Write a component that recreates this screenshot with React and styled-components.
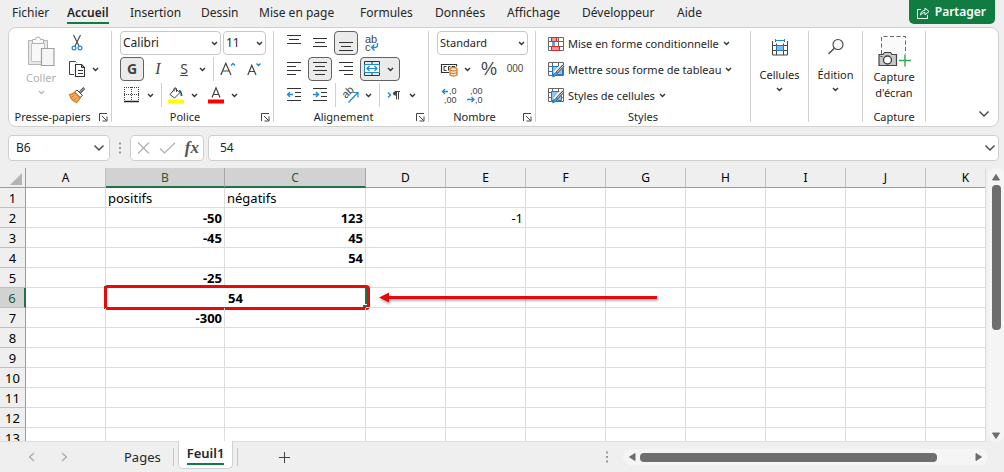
import React from "react";
import styled, { createGlobalStyle, css } from "styled-components";

const Global = createGlobalStyle`
  *, *::before, *::after { box-sizing: border-box; }
  body { margin: 0; background: #efefef; overflow: hidden; }
  button, input, select { font: inherit; color: inherit; }
  svg { overflow: visible; flex: none; }
`;

const Page = styled.div`
  display: flex;
  flex-direction: column;
  height: 100vh;
  background: #efefef;
  color: #262626;
  font: 12px/16px "Noto Sans", "Open Sans", sans-serif;
`;

/* ---------- Menu tabs ---------- */
const MenuBar = styled.header`
  display: flex;
  justify-content: space-between;
  height: 27px;
  padding: 0 9px 0 12px;
`;
const Tabs = styled.nav`
  display: flex;
  align-items: flex-start;
`;
const Tab = styled.a`
  flex: 0 0 ${(p) => p.$w}px;
  padding-top: 5px;
  color: inherit;
  text-decoration: none;
  white-space: nowrap;
  font-weight: ${(p) => (p.$active ? 600 : 400)};
`;
const TabText = styled.span`
  display: inline-block;
  height: 19px;
  border-bottom: 2px solid ${(p) => (p.$active ? "#107c41" : "transparent")};
`;
const Share = styled.button`
  display: flex;
  align-items: center;
  gap: 5px;
  height: 24px;
  padding: 0 9px 0 8px;
  border: 0;
  border-radius: 0 0 5px 5px;
  background: #107c41;
  color: #fff;
  font-weight: 600;
`;

/* ---------- Ribbon ---------- */
const RibbonBox = styled.section`
  display: flex;
  margin: 0 5px 0 8px;
  border: 1px solid #d0d0d0;
  border-radius: 8px;
  background: #fff;
  height: 100px;
  padding: 3px 0;
`;
const Group = styled.div`
  display: flex;
  flex-direction: column;
  flex: 0 0 ${(p) => p.$w}px;
  padding: 0 0 0 8px;
  border-right: 1px solid #d0d0d0;
  height: 91px;
`;
const Rows = styled.div`
  display: flex;
  flex-direction: column;
  gap: 2px;
`;
const Row = styled.div`
  display: flex;
  align-items: center;
  gap: 2px;
  height: 24px;
`;
const GroupFoot = styled.div`
  display: flex;
  align-items: center;
  margin: auto 0 -2px -8px;
  height: 14px;
  font-size: 11px;
`;
const GroupName = styled.span`
  flex: 1;
  text-align: center;
  white-space: nowrap;
`;
const Launcher = styled.button`
  display: flex;
  padding: 0;
  width: 12px;
  margin-left: 3px;
  border: 0;
  background: none;
`;
const IconButton = styled.button`
  display: flex;
  align-items: center;
  justify-content: center;
  width: 24px;
  height: 24px;
  padding: 0;
  border: 1px solid transparent;
  border-radius: 4px;
  background: none;
  ${(p) => p.$on && css`border-color: #616161; background: #ebebeb;`}
`;
const Split = styled.button`
  display: flex;
  align-items: center;
  height: 24px;
  width: ${(p) => (p.$on ? 40 : 38)}px;
  padding: 0;
  border: 1px solid transparent;
  border-radius: 4px;
  background: none;
  ${(p) => p.$on && css`border-color: #616161; background: #ebebeb;`}
`;
const SplitIcon = styled.span`
  display: flex;
  justify-content: center;
  width: 22px;
`;
const SplitArrow = styled.span`
  display: flex;
  justify-content: center;
  width: 14px;
`;
const Rule = styled.span`
  width: 1px;
  height: 24px;
  margin-left: 1px;
  background: #d0d0d0;
`;
const SelectWrap = styled.label`
  display: flex;
  align-items: center;
  position: relative;
  width: ${(p) => p.$w}px;
  height: 24px;
  svg { position: absolute; right: 3px; pointer-events: none; }
`;
const Select = styled.select`
  appearance: none;
  width: 100%;
  height: 24px;
  padding: 0 2px;
  border: 1px solid #c8c8c8;
  border-radius: 4px;
  background: #fff;
  font-size: ${(p) => (p.$small ? 11 : 12)}px;
`;
const Letter = styled.span`
  font-size: ${(p) => p.$size || 14}px;
  line-height: 20px;
  color: #444;
  ${(p) => p.$plain && 'font-family: "Liberation Sans", sans-serif;'}
  ${(p) => p.$bold && "font-weight: 700;"}
  ${(p) => p.$italic && 'font-style: italic; font-family: "Liberation Serif", serif;'}
  ${(p) => p.$under && "text-decoration: underline;"}
`;
const PasteArea = styled.div`
  display: flex;
`;
const BigButton = styled.button`
  display: flex;
  flex-direction: column;
  align-items: center;
  width: 100%;
  padding: ${(p) => p.$top || 0}px 0 0;
  border: 0;
  background: none;
  font-size: 11px;
  line-height: 16px;
  gap: ${(p) => p.$gap || 4}px;
  ${(p) => p.$paste && "width: 48px; color: #b0b0b0;"}
`;
const BigIcon = styled.span`
  display: flex;
  height: 24px;
`;
const CenterGroup = styled(Group)`
  padding: 0;
  ${GroupFoot} { margin-left: 0; }
`;
const TextCommand = styled.button`
  display: flex;
  align-items: center;
  gap: 4px;
  height: 24px;
  padding: 1px 4px 0;
  border: 0;
  background: none;
  font-size: 11px;
  white-space: nowrap;
`;
const Collapse = styled.button`
  margin: auto 8px 5px auto;
  padding: 0;
  border: 0;
  background: none;
  display: flex;
`;

/* ---------- Formula bar ---------- */
const FormulaBar = styled.section`
  display: flex;
  align-items: center;
  height: 26px;
  margin: 8px 5px 7px 8px;
`;
const NameBox = styled.label`
  display: flex;
  align-items: center;
  width: 102px;
  height: 26px;
  padding: 0 4px 0 7px;
  border: 1px solid #d0d0d0;
  border-radius: 4px;
  background: #fff;
`;
const PlainInput = styled.input`
  flex: 1;
  min-width: 0;
  width: 100%;
  padding: 0;
  border: 0;
  outline: 0;
  background: none;
`;
const Grip = styled.span`
  display: flex;
  justify-content: center;
  width: 20px;
`;
const EntryTools = styled.div`
  display: flex;
  align-items: center;
  justify-content: space-between;
  width: 74px;
  height: 26px;
  padding: 0 4px 0 6px;
  border: 1px solid #d0d0d0;
  border-radius: 4px;
  background: #fff;
`;
const ToolButton = styled.button`
  display: flex;
  padding: 0;
  border: 0;
  background: none;
`;
const Fx = styled.span`
  font: italic bold 17px/20px "Liberation Serif", serif;
  color: #555;
`;
const FormulaBox = styled(NameBox)`
  flex: 1;
  margin-left: 4px;
  padding: 0 2px 0 11px;
`;

/* ---------- Sheet ---------- */
const SheetArea = styled.main`
  display: flex;
  flex: 1;
  min-height: 0;
`;
const GridWindow = styled.div`
  flex: 1;
  min-width: 0;
  overflow: hidden;
  border-right: 1px solid #dcdcdc;
  border-bottom: 1px solid #dcdcdc;
`;
const Table = styled.table`
  table-layout: fixed;
  width: 1006px;
  border-collapse: separate;
  border-spacing: 0;
  background: #fff;
  color: #000;
  font-size: 13px;
  line-height: 18px;
`;
const Corner = styled.th`
  height: 20px;
  padding: 0 3px 2px 0;
  border-right: 1px solid #9b9b9b;
  border-bottom: 1px solid #9b9b9b;
  background: #efefef;
  vertical-align: bottom;
  svg { display: block; margin-left: auto; }
`;
const ColHead = styled.th`
  height: 20px;
  padding: 1px 0 0;
  font-size: 12px;
  font-weight: 400;
  border-right: 1px solid ${(p) => (p.$on ? "#a8a8a8" : "#c0c0c0")};
  border-bottom: 1px solid #9b9b9b;
  background: #efefef;
  ${(p) => p.$on && css`
    background: #d2d2d2;
    color: #1e5c3d;
    border-bottom: 2px solid #217346;
    line-height: 17px;
  `}
`;
const RowHead = styled.th`
  height: 20px;
  padding: 1px 0 0;
  font-weight: 400;
  border-right: 1px solid #9b9b9b;
  border-bottom: 1px solid #c0c0c0;
  background: #efefef;
  ${(p) => p.$on && css`
    background: #d2d2d2;
    color: #1e5c3d;
    border-right: 2px solid #217346;
  `}
`;
const Cell = styled.td`
  height: 20px;
  padding: 1px 2px 0;
  white-space: nowrap;
  border-right: 1px solid #dcdcdc;
  border-bottom: 1px solid #dcdcdc;
  text-align: ${(p) => p.$align || "left"};
  font-weight: ${(p) => (p.$bold ? 700 : 400)};
  position: relative;
`;
const Selection = styled.span`
  position: absolute;
  inset: -2px;
  border: 2px solid #217346;
  &::after {
    content: "";
    position: absolute;
    right: -2px;
    bottom: 0;
    width: 4px;
    height: 3px;
    border-top: 1px solid #fff;
    background: #217346;
  }
`;
const Highlight = styled.span`
  position: absolute;
  inset: -3px -5px -3px -2px;
  border: 3px solid #e60a0a;
  border-radius: 4px;
`;
const Arrow = styled.svg`
  position: absolute;
  left: calc(100% + 14px);
  top: 0;
  z-index: 1;
  filter: drop-shadow(1px 2px 1px rgba(0, 0, 0, 0.3));
`;

/* ---------- Scroll bars ---------- */
const VScroll = styled.div`
  display: flex;
  flex-direction: column;
  align-items: center;
  gap: 4px;
  width: 16px;
  margin-left: 2px;
  padding: 5px 0 2px;
  border-radius: 8px;
  background: #f5f5f5;
`;
const VThumb = styled.span`
  width: 9px;
  height: 145px;
  border-radius: 4px;
  background: #6e6e6e;
`;
const Spacer = styled.span`
  flex: 1;
`;
const Footer = styled.footer`
  display: flex;
  align-items: flex-start;
  height: 30px;
  padding-right: 16px;
`;
const SheetNav = styled.div`
  display: flex;
  align-items: center;
  gap: 24px;
  height: 30px;
  padding-left: 28px;
  width: 116px;
`;
const SheetTab = styled.button`
  height: 28px;
  margin-top: ${(p) => (p.$active ? -1 : 1)}px;
  padding: 0 8px;
  border: 0;
  background: none;
  font-size: 13px;
  ${(p) => p.$active && css`
    background: #fff;
    border: 1px solid #d0d0d0;
    border-top: 0;
    border-radius: 0 0 5px 5px;
    font-weight: 600;
    position: relative;
  `}
`;
const TabLabel = styled.span`
  display: block;
  line-height: 19px;
  ${(p) => p.$active && "border-bottom: 2px solid #107c41;"}
`;
const TabRule = styled.span`
  width: 1px;
  height: 18px;
  margin: 6px 4px 0;
  background: #c8c8c8;
`;
const AddSheet = styled(ToolButton)`
  margin: 10px 0 0 37px;
`;
const HScroll = styled.div`
  display: flex;
  align-items: center;
  gap: 4px;
  flex: 0 1 365px;
  height: 16px;
  margin: 7px 0 0 10px;
  padding: 0 5px;
  border-radius: 8px;
  background: #f5f5f5;
`;
const HThumb = styled.span`
  flex: 0 0 297px;
  height: 9px;
  border-radius: 4px;
  background: #6e6e6e;
`;
const FootGrip = styled(Grip)`
  margin-top: 9px;
  width: 12px;
`;

/* ---------- Icons ---------- */
const Svg = ({ w = 16, h = 16, children, ...rest }) => (
  <svg width={w} height={h} viewBox={`0 0 ${w} ${h}`} fill="none" aria-hidden="true" {...rest}>{children}</svg>
);
const IconText = styled.text`
  font: ${(p) => p.$size || 9}px "Liberation Sans", sans-serif;
  fill: #444;
`;
const Chevron = ({ color = "#333" }) => (
  <Svg w={7} h={5}><path d="M1 1l2.500 2.500L6 1" stroke={color} strokeWidth="1.400" /></Svg>
);
const WideChevron = () => (
  <Svg w={12} h={8}><path d="M1.500 1.500L6 6l4.500-4.500" stroke="#444" strokeWidth="1.400" /></Svg>
);
const Dots = () => (
  <Svg w={2} h={12}><path d="M0 1.500h2M0 6h2M0 10.500h2" stroke="#9a9a9a" strokeWidth="2" /></Svg>
);
const LaunchIcon = () => (
  <Svg w={9} h={9}><path d="M.5 8V.5H8M3 3l4.500 4.500M8 3.500V8H3.500" stroke="#444" /></Svg>
);
const PasteIcon = () => (
  <Svg w={28} h={30}>
    <path d="M1.500 4.500h19v24h-19z" fill="#e8e8e8" stroke="#b5b5b5" />
    <path d="M4.500 7.500h13v18h-13z" fill="#f8f8f8" stroke="#c4c4c4" />
    <path d="M5.500 7.500v-4h3a2.500 2.500 0 0 1 5 0h3v4z" fill="#fafafa" stroke="#b0b0b0" />
    <path d="M14.500 12.500h12.500v17h-12.500z" fill="#f5f5f5" stroke="#a0a0a0" strokeWidth="1.200" />
  </Svg>
);
const CutIcon = () => (
  <Svg w={12} h={16}>
    <path d="M2.500 0l5.500 11M9.500 0L4 11" stroke="#444" strokeWidth="1.100" />
    <circle cx="3" cy="13" r="1.900" stroke="#1e88d2" strokeWidth="1.200" />
    <circle cx="9" cy="13" r="1.900" stroke="#1e88d2" strokeWidth="1.200" />
  </Svg>
);
const CopyIcon = () => (
  <Svg w={17} h={16}>
    <path d="M5 13.500H.5V.5h6l1 1" stroke="#444" />
    <path d="M6.500 3.500h6l3 3v9h-9z" fill="#fff" stroke="#333" strokeWidth="1.100" />
    <path d="M12.500 3.500v3h3M9 9.500h5M9 12.500h5" stroke="#333" />
  </Svg>
);
const BrushIcon = () => (
  <Svg>
    <path d="M15.300 1L11 5.500" stroke="#444" strokeWidth="2.600" />
    <path d="M15 1.300L11 5.500" stroke="#fff" strokeWidth=".8" />
    <path d="M8 3l5.500 5.500-2.500 2-5.500-5.500z" fill="#fff" stroke="#444" />
    <path d="M5.500 5.500l5.500 5.500c-.5 1.500-2 3-3.500 4.500C4 14 1.500 11 .5 7.500c2 0 3.500-.5 5-2z" fill="#f5b070" stroke="#e07a1a" strokeWidth="1.200" />
    <path d="M2.500 10l3-1.500M5 13l3-2.500" stroke="#e07a1a" />
  </Svg>
);
const BorderIcon = () => (
  <Svg>
    <path d="M.5 0v14M7.500 0v14M14.500 0v14M0 .5h15M0 7.500h15" stroke="#444" strokeDasharray="1 1" />
    <path d="M0 14.500h15" stroke="#222" strokeWidth="1.500" />
  </Svg>
);
const FillIcon = () => (
  <Svg w={16} h={17}>
    <path d="M7 1.500L2 7.500l4.500 3.500 5.500-5.500z" fill="#fff" stroke="#444" />
    <path d="M6 4.500V1.500Q7 0 8.500 1.500V5" stroke="#444" />
    <path d="M11 3.500q2.500 1 2.500 5.500" stroke="#1f5f8b" strokeWidth="1.800" />
    <path d="M0 12.500h16v4H0z" fill="#ff0" />
  </Svg>
);
const FontColorIcon = () => (
  <Svg w={16} h={17}>
    <path d="M4 10.500L8 .8l4 9.700M5.300 7.500h5.400" stroke="#444" strokeWidth="1.200" />
    <path d="M0 12.500h16v4H0z" fill="#f00" />
  </Svg>
);
const GrowIcon = () => (
  <Svg w={16} h={14}>
    <path d="M.8 13L5.800 1.200 11 13M2.600 9h6.600" stroke="#444" strokeWidth="1.200" />
    <path d="M11 3.500l2-2 2 2" stroke="#1e88d2" strokeWidth="1.300" />
  </Svg>
);
const ShrinkIcon = () => (
  <Svg w={16} h={14}>
    <path d="M1.800 13L5.800 3.200 10 13M3.200 9.500h5.300" stroke="#444" strokeWidth="1.200" />
    <path d="M10.500 1.500l2 2 2-2" stroke="#1e88d2" strokeWidth="1.300" />
  </Svg>
);
/* Horizontal strokes given as [x1, x2, y] */
const Lines = ({ rows }) => (
  <Svg>{rows.map(([a, b, y]) => <path key={y} d={`M${a} ${y}.5H${b}`} stroke="#333" />)}</Svg>
);
const TopIcon = () => <Lines rows={[[1, 15, 0], [3, 13, 4], [1, 15, 8]]} />;
const MiddleIcon = () => <Lines rows={[[1, 15, 3], [3, 13, 7], [1, 15, 11]]} />;
const BottomIcon = () => <Lines rows={[[1, 15, 7], [3, 13, 11], [1, 15, 15]]} />;
const LeftIcon = () => <Lines rows={[[1, 15, 1], [1, 10, 5], [1, 15, 9], [1, 10, 13]]} />;
const CenterIcon = () => <Lines rows={[[1, 15, 1], [3, 13, 5], [1, 15, 9], [3, 13, 13]]} />;
const RightIcon = () => <Lines rows={[[1, 15, 1], [6, 15, 5], [1, 15, 9], [6, 15, 13]]} />;
const IndentIcon = ({ out }) => (
  <Svg>
    <path d="M1 1.500h14M9 5.500h6M9 9.500h6M1 13.500h14" stroke="#333" />
    <path d={out ? "M7 7.500H1.500M4 5L1.500 7.500 4 10" : "M1 7.500h5.500M4 5l2.500 2.500L4 10"} stroke="#1e88d2" strokeWidth="1.300" />
  </Svg>
);
const WrapIcon = () => (
  <Svg w={16} h={18}>
    <IconText x="1" y="9" $size={11}>ab</IconText>
    <IconText x="1" y="17" $size={11}>c</IconText>
    <path d="M13.500 9v2q0 2.500-3 2.500H7.500M10.500 10.500L7.500 13.500l3 3" stroke="#1e88d2" strokeWidth="1.300" />
  </Svg>
);
const MergeIcon = () => (
  <Svg>
    <path d="M.5 .5h15v14H.5zM8 .5v3M8 11.500v3" stroke="#333" />
    <path d="M.5 3.500h15v8H.5z" fill="#fff" stroke="#1e88d2" />
    <path d="M3 7.500h10M5.500 5L3 7.500 5.500 10M10.500 5L13 7.500 10.500 10" stroke="#1e88d2" strokeWidth="1.200" />
  </Svg>
);
const OrientIcon = () => (
  <Svg w={17} h={16}>
    <IconText x="4" y="12" $size={11} transform="rotate(-45 4 12)">ab</IconText>
    <path d="M6.500 15.500L15.500 6M11 5.500h5v5" stroke="#1e88d2" strokeWidth="1.200" />
  </Svg>
);
const PilcrowIcon = () => (
  <Svg w={14} h={12}>
    <path d="M1 3.500L3.500 6 1 8.500" stroke="#1e88d2" strokeWidth="1.400" />
    <path d="M12.500 2.500H8a2 2 0 0 0 0 4h1.500V2.500" fill="#444" />
    <path d="M9.500 2v8.500M11.500 2v8.500M8 2.500h5" stroke="#444" />
  </Svg>
);
const CurrencyIcon = () => (
  <Svg w={17} h={14}>
    <path d="M8 10.500H.5v-8h15v2" stroke="#333" strokeWidth="1.200" />
    <path d="M5.500 4.500H3v4h2.500M9.500 4.500H7.500v4M11 5.500V4.500h3" stroke="#333" />
    <path d="M9 6.500v6.500q3.500 2 7 0V6.500q-3.500-2-7 0zM9 8q3.500 2 7 0M9 10.500q3.500 2 7 0" fill="#fff" stroke="#e07a1a" strokeWidth="1.300" />
  </Svg>
);
const DecimalIcon = ({ add }) => (
  <Svg w={17} h={16}>
    <IconText x={add ? 8 : 3} y="7">{add ? ",0" : ",00"}</IconText>
    <IconText x={add ? 3 : 8} y="16">{add ? ",00" : ",0"}</IconText>
    <path d={add ? "M7 4.500H1.500M4 2L1.500 4.500 4 7" : "M0 12.500h7M4.500 10L7 12.500 4.500 15"} stroke="#1e88d2" strokeWidth="1.300" />
  </Svg>
);
const TableGrid = () => (
  <path d="M.5 .5h15v13H.5zM.5 4.500h15M.5 9.500h15M4.500 .5v13M10.500 .5v13" stroke="#666" />
);
const ConditionalIcon = () => (
  <Svg h={14}>
    <TableGrid />
    <path d="M3.500 .5h5v4h-5zM3.500 9.500h8v4h-8z" fill="#f79aa0" stroke="#e0262c" strokeWidth="1.200" />
    <path d="M4 5h3v4H4z" fill="#58a8e6" />
  </Svg>
);
const StyleIcon = ({ full }) => (
  <Svg>
    <TableGrid />
    <path d={full ? "M3.500 3.500h10v9h-10z" : "M4.500 4.500h10v8h-10z"} fill="#8cc4f0" stroke="#1e78c2" />
    <path d="M15 3L7 11.500" stroke="#fff" strokeWidth="4.500" />
    <path d="M15.500 3.500L8.500 11" stroke="#555" strokeWidth="2.600" />
    <path d="M15.200 3.800L9 10.500" stroke="#fff" strokeWidth=".8" />
    <path d="M8.500 10.500q1.500 3-4 4.500 1.500-1 1.500-3 .5-1.500 2.500-1.500z" fill="#5aaae8" stroke="#1e68b0" strokeWidth=".8" />
  </Svg>
);
const CellsIcon = () => (
  <Svg h={17}>
    <path d="M.5 2v14h15V2M.5 6.500h15M.5 11.500h15M4.500 4.500v11.500M11.500 4.500v11.500" stroke="#444" />
    <path d="M4.500 6.500h7v5h-7z" fill="#7cbcf0" stroke="#1e78c2" />
    <path d="M3.500 0v3M12.500 0v3M3.500 1.500h9" stroke="#1e88d2" />
  </Svg>
);
const SearchIcon = () => (
  <Svg h={17}>
    <circle cx="10" cy="5.500" r="5" fill="#fafafa" stroke="#444" strokeWidth="1.100" />
    <path d="M6.300 9.200L.5 15" stroke="#444" strokeWidth="1.300" />
  </Svg>
);
const CaptureIcon = () => (
  <Svg w={33} h={31}>
    <path d="M3.500 .5h24v22h-24z" fill="#fafafa" />
    <path d="M3.500 18V.5h24V18" stroke="#666" strokeDasharray="4 2.500" />
    <path d="M1 18.500h4l1.500-2h6l1.500 2h4.500v11H1z" fill="#c8c8c8" stroke="#444" strokeWidth="1.200" />
    <circle cx="9.500" cy="24" r="4" fill="#fff" stroke="#444" strokeWidth="1.400" />
    <path d="M2.500 20.500h2" stroke="#444" />
    <path d="M27 18.500v12M21 24.500h12" stroke="#2fa84f" strokeWidth="1.400" />
  </Svg>
);
const ShareIcon = () => (
  <Svg w={13} h={13}>
    <path d="M4 3.500H.5v9h10V9" stroke="#fff" />
    <path d="M3.500 9Q4 4.500 8 4.500V2l4 3.500L8 9V6.500Q5.500 6.500 3.500 9z" stroke="#fff" />
  </Svg>
);
const Triangle = ({ d, w = 10, h = 8 }) => (
  <Svg w={w} h={h}><path d={d} fill="#6e6e6e" stroke="#6e6e6e" strokeLinejoin="round" /></Svg>
);

/* ---------- Data ---------- */
const TABS = [["Fichier", 55], ["Accueil", 63], ["Insertion", 71], ["Dessin", 58], ["Mise en page", 101], ["Formules", 75], ["Données", 72], ["Affichage", 75], ["Développeur", 95], ["Aide", 30]];
const COLUMNS = [["A", 80], ["B", 119], ["C", 141], ["D", 80], ["E", 80], ["F", 80], ["G", 80], ["H", 80], ["I", 80], ["J", 80], ["K", 80]];
const bold = (value) => ({ value, $align: "right", $bold: true });
const CELLS = {
  B1: { value: "positifs" },
  C1: { value: "négatifs" },
  B2: bold("-50"),
  C2: bold("123"),
  E2: { value: "-1", $align: "right" },
  B3: bold("-45"),
  C3: bold("45"),
  C4: bold("54"),
  B5: bold("-25"),
  B7: bold("-300"),
};
const ROWS = Array.from({ length: 13 }, (_, i) => i + 1);

const Command = ({ label, on, children }) => <IconButton aria-label={label} $on={on}>{children}</IconButton>;
const SplitCommand = ({ label, on, children }) => (
  <Split aria-label={label} $on={on}>
    <SplitIcon>{children}</SplitIcon>
    <SplitArrow><Chevron /></SplitArrow>
  </Split>
);
const Picker = ({ label, width, value, small }) => (
  <SelectWrap $w={width}>
    <Select aria-label={label} defaultValue={value} $small={small}><option>{value}</option></Select>
    <Chevron />
  </SelectWrap>
);
const Foot = ({ name, launch }) => (
  <GroupFoot>
    <GroupName>{name}</GroupName>
    {launch && <Launcher aria-label={`Options ${name}`}><LaunchIcon /></Launcher>}
  </GroupFoot>
);

function Ribbon() {
  return (
    <RibbonBox>
      <Group $w={103}>
        <PasteArea>
          <BigButton $paste $top={5}>
            <PasteIcon />
            Coller
            <Chevron color="#b8b8b8" />
          </BigButton>
          <Rows>
            <Row><Command label="Couper"><CutIcon /></Command></Row>
            <Row><SplitCommand label="Copier"><CopyIcon /></SplitCommand></Row>
            <Row><Command label="Reproduire la mise en forme"><BrushIcon /></Command></Row>
          </Rows>
        </PasteArea>
        <Foot name="Presse-papiers" launch />
      </Group>

      <Group $w={162}>
        <Rows>
          <Row>
            <Picker label="Police" width={101} value="Calibri" />
            <Picker label="Taille" width={43} value="11" />
          </Row>
          <Row>
            <Command label="Gras" on><Letter $bold>G</Letter></Command>
            <Command label="Italique"><Letter $italic $size={16}>I</Letter></Command>
            <SplitCommand label="Souligné"><Letter $under>S</Letter></SplitCommand>
            <Rule />
            <Command label="Agrandir la police"><GrowIcon /></Command>
            <Command label="Réduire la police"><ShrinkIcon /></Command>
          </Row>
          <Row>
            <SplitCommand label="Bordures"><BorderIcon /></SplitCommand>
            <Rule />
            <SplitCommand label="Remplissage"><FillIcon /></SplitCommand>
            <SplitCommand label="Couleur de police"><FontColorIcon /></SplitCommand>
          </Row>
        </Rows>
        <Foot name="Police" launch />
      </Group>

      <Group $w={155}>
        <Rows>
          <Row>
            <Command label="Aligner en haut"><TopIcon /></Command>
            <Command label="Aligner au milieu"><MiddleIcon /></Command>
            <Command label="Aligner en bas" on><BottomIcon /></Command>
            <Command label="Renvoyer à la ligne"><WrapIcon /></Command>
          </Row>
          <Row>
            <Command label="Aligner à gauche"><LeftIcon /></Command>
            <Command label="Centrer" on><CenterIcon /></Command>
            <Command label="Aligner à droite"><RightIcon /></Command>
            <SplitCommand label="Fusionner et centrer" on><MergeIcon /></SplitCommand>
          </Row>
          <Row>
            <Command label="Diminuer le retrait"><IndentIcon out /></Command>
            <Command label="Augmenter le retrait"><IndentIcon /></Command>
            <Rule />
            <SplitCommand label="Orientation"><OrientIcon /></SplitCommand>
            <Rule />
            <SplitCommand label="Sens du texte"><PilcrowIcon /></SplitCommand>
          </Row>
        </Rows>
        <Foot name="Alignement" launch />
      </Group>

      <Group $w={107}>
        <Rows>
          <Row><Picker label="Format de nombre" width={91} value="Standard" small /></Row>
          <Row>
            <SplitCommand label="Format comptable"><CurrencyIcon /></SplitCommand>
            <Command label="Pourcentage"><Letter $plain $size={18}>%</Letter></Command>
            <Command label="Séparateur de milliers"><Letter $plain $size={10}>000</Letter></Command>
          </Row>
          <Row>
            <Command label="Ajouter une décimale"><DecimalIcon add /></Command>
            <Command label="Réduire les décimales"><DecimalIcon /></Command>
          </Row>
        </Rows>
        <Foot name="Nombre" launch />
      </Group>

      <Group $w={215}>
        <Rows>
          <Row><TextCommand><ConditionalIcon />Mise en forme conditionnelle<Chevron /></TextCommand></Row>
          <Row><TextCommand><StyleIcon />Mettre sous forme de tableau<Chevron /></TextCommand></Row>
          <Row><TextCommand><StyleIcon full />Styles de cellules<Chevron /></TextCommand></Row>
        </Rows>
        <Foot name="Styles" />
      </Group>

      <CenterGroup $w={58}>
        <BigButton $top={8}><BigIcon><CellsIcon /></BigIcon>Cellules<Chevron /></BigButton>
      </CenterGroup>
      <CenterGroup $w={54}>
        <BigButton $top={8}><BigIcon><SearchIcon /></BigIcon>Édition<Chevron /></BigButton>
      </CenterGroup>
      <CenterGroup $w={63}>
        <BigButton $top={5} $gap={2}><CaptureIcon /><span>Capture<br />d'écran</span></BigButton>
        <Foot name="Capture" />
      </CenterGroup>
      <Collapse aria-label="Réduire le ruban"><WideChevron /></Collapse>
    </RibbonBox>
  );
}

function Sheet() {
  return (
    <GridWindow>
      <Table>
        <colgroup>
          <col width="26" />
          {COLUMNS.map(([name, width]) => <col key={name} width={width} />)}
        </colgroup>
        <thead>
          <tr>
            <Corner><Svg w={12} h={12}><path d="M12 0v12H0z" fill="#b4b4b4" /></Svg></Corner>
            {COLUMNS.map(([name]) => <ColHead key={name} $on={name === "B" || name === "C"}>{name}</ColHead>)}
          </tr>
        </thead>
        <tbody>
          {ROWS.map((row) => (
            <tr key={row}>
              <RowHead $on={row === 6}>{row}</RowHead>
              {COLUMNS.map(([name]) => {
                if (row === 6 && name === "C") return null;
                if (row === 6 && name === "B") {
                  return (
                    <Cell key={name} colSpan={2} $align="center" $bold>
                      54
                      <Selection />
                      <Highlight />
                      <Arrow width="282" height="20" viewBox="0 0 282 20" fill="none">
                        <path d="M8 9.500h270" stroke="#e60a0a" strokeWidth="3" />
                        <path d="M0 9.500l10-5v10z" fill="#e60a0a" />
                      </Arrow>
                    </Cell>
                  );
                }
                const { value, ...look } = CELLS[name + row] || {};
                return <Cell key={name} {...look}>{value}</Cell>;
              })}
            </tr>
          ))}
        </tbody>
      </Table>
    </GridWindow>
  );
}

export default function App() {
  return (
    <Page>
      <Global />
      <MenuBar>
        <Tabs>
          {TABS.map(([name, width]) => (
            <Tab key={name} href="#" $w={width} $active={name === "Accueil"}>
              <TabText $active={name === "Accueil"}>{name}</TabText>
            </Tab>
          ))}
        </Tabs>
        <Share><ShareIcon />Partager</Share>
      </MenuBar>
      <Ribbon />
      <FormulaBar>
        <NameBox>
          <PlainInput aria-label="Zone Nom" defaultValue="B6" />
          <WideChevron />
        </NameBox>
        <Grip><Dots /></Grip>
        <EntryTools>
          <ToolButton aria-label="Annuler"><Svg w={13} h={12}><path d="M1 .5l11 11M12 .5l-11 11" stroke="#b0b0b0" strokeWidth="1.200" /></Svg></ToolButton>
          <ToolButton aria-label="Entrer"><Svg w={17} h={12}><path d="M1 6.500l4.500 4.500L16 .8" stroke="#b0b0b0" strokeWidth="1.200" /></Svg></ToolButton>
          <ToolButton aria-label="Insérer une fonction"><Fx>fx</Fx></ToolButton>
        </EntryTools>
        <FormulaBox>
          <PlainInput aria-label="Barre de formule" defaultValue="54" />
          <WideChevron />
        </FormulaBox>
      </FormulaBar>
      <SheetArea>
        <Sheet />
        <VScroll>
          <Triangle d="M5 1.500L8.500 7h-7z" />
          <VThumb />
          <Spacer />
          <Triangle d="M5 6.500L8.500 1h-7z" />
        </VScroll>
      </SheetArea>
      <Footer>
        <SheetNav>
          <ToolButton aria-label="Feuille précédente"><Svg w={8} h={10}><path d="M6 1L1.500 5 6 9" stroke="#aaa" strokeWidth="1.300" /></Svg></ToolButton>
          <ToolButton aria-label="Feuille suivante"><Svg w={8} h={10}><path d="M2 1l4.500 4L2 9" stroke="#aaa" strokeWidth="1.300" /></Svg></ToolButton>
        </SheetNav>
        <SheetTab><TabLabel>Pages</TabLabel></SheetTab>
        <TabRule />
        <SheetTab $active><TabLabel $active>Feuil1</TabLabel></SheetTab>
        <TabRule />
        <AddSheet aria-label="Nouvelle feuille"><Svg w={11} h={11}><path d="M5.500 0v11M0 5.500h11" stroke="#444" /></Svg></AddSheet>
        <Spacer />
        <FootGrip><Dots /></FootGrip>
        <HScroll>
          <Triangle w={8} h={10} d="M1.500 5L7 1.500v7z" />
          <HThumb />
          <Spacer />
          <Triangle w={8} h={10} d="M6.500 5L1 1.500v7z" />
        </HScroll>
      </Footer>
    </Page>
  );
}
